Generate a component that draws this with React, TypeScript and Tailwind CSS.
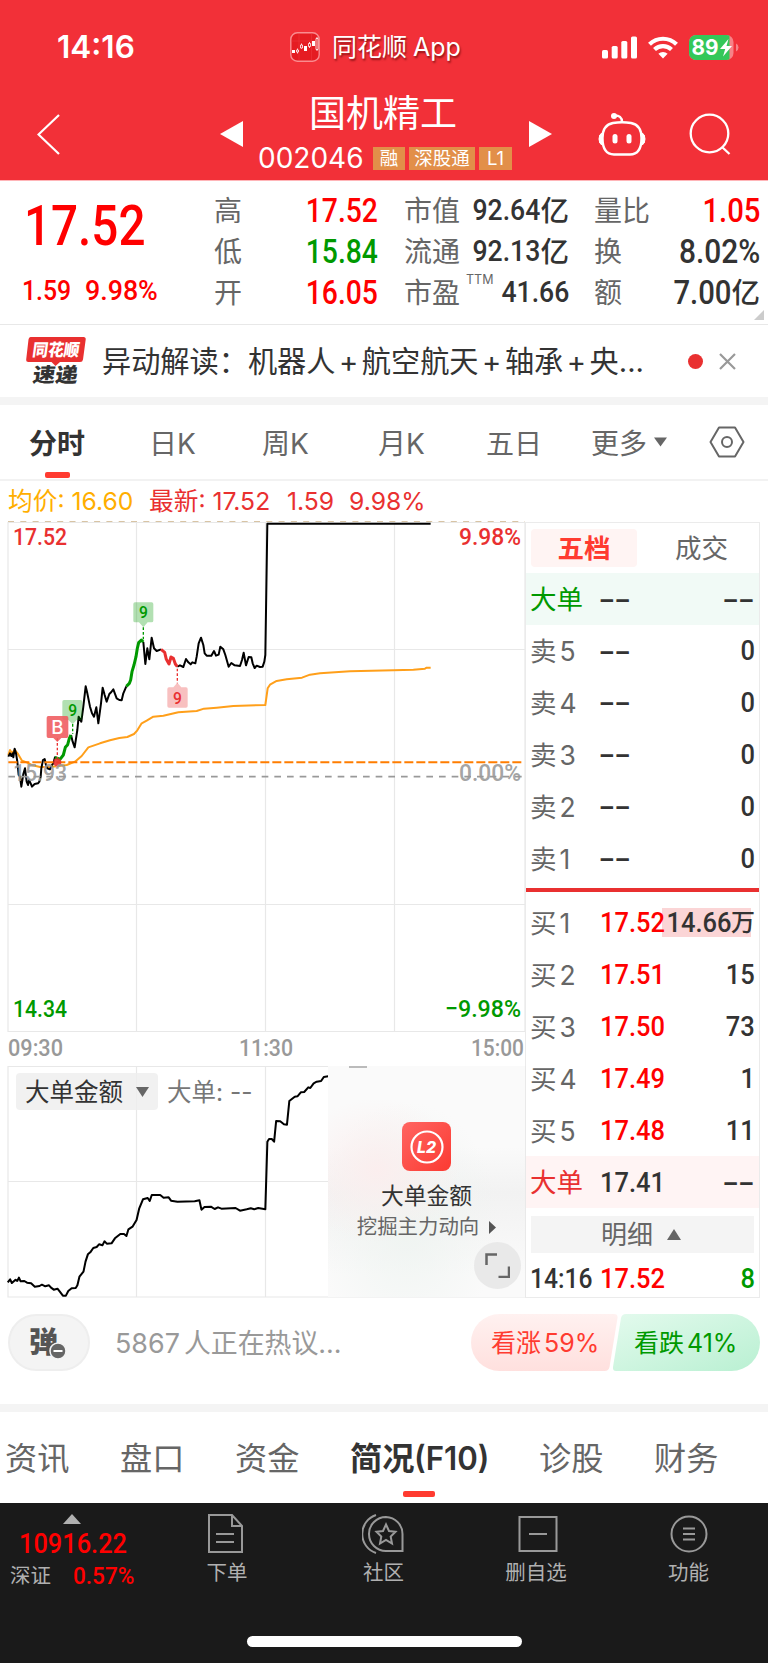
import type { ReactNode } from 'react';
import clsx from 'clsx';

interface Stat {
  label: string;
  value: string;
  unit?: string;
  sup?: string;
  color?: string;
}

interface Level {
  label: string;
  index?: number;
  price: string;
  volume: string;
}

const statColumns: { className: string; size: string; num: string; stats: Stat[] }[] = [
  {
    className: 'w-[164px]',
    size: 'text-[32.5px]',
    num: 'scale-x-[.87]',
    stats: [
      { label: '高', value: '17.52', color: 'text-[#ff0000]' },
      { label: '低', value: '15.84', color: 'text-[#009900]' },
      { label: '开', value: '16.05', color: 'text-[#ff0000]' }
    ]
  },
  {
    className: 'ml-[26px] w-[165px]',
    size: 'text-[29.5px]',
    num: 'scale-x-[.9]',
    stats: [
      { label: '市值', value: '92.64', unit: '亿' },
      { label: '流通', value: '92.13', unit: '亿' },
      { label: '市盈', value: '41.66', sup: 'TTM' }
    ]
  },
  {
    className: 'ml-[25px] w-[166px]',
    size: 'text-[32.5px]',
    num: 'scale-x-[.9]',
    stats: [
      { label: '量比', value: '1.05', color: 'text-[#ff0000]' },
      { label: '换', value: '8.02%' },
      { label: '额', value: '7.00', unit: '亿' }
    ]
  }
];

const sells: Level[] = [5, 4, 3, 2, 1].map((index) => ({ label: '卖', index, price: '--', volume: '0' }));

const buys: Level[] = [
  { label: '买', index: 1, price: '17.52', volume: '14.66' },
  { label: '买', index: 2, price: '17.51', volume: '15' },
  { label: '买', index: 3, price: '17.50', volume: '73' },
  { label: '买', index: 4, price: '17.49', volume: '1' },
  { label: '买', index: 5, price: '17.48', volume: '11' }
];

function Num({ children, className }: { children: ReactNode; className?: string }) {
  return (
    <span className={clsx("inline-block whitespace-nowrap font-medium [font-family:Roboto,sans-serif]", className)}>
      {children}
    </span>
  );
}

function StatusBar() {
  return (
    <div className="flex h-[94px] items-center">
      <span className="ml-[57px] w-[233px] text-[31.500px] leading-none font-semibold">14:16</span>
      <svg width="30" height="30" viewBox="0 0 30 30">
        <rect x="0.8" y="0.8" width="28.4" height="28.4" rx="6.5" fill="#e51c22" stroke="#fa8b8f" strokeWidth="1.4" />
        <path d="M1.5 9h27M9 1.5v27M21.500 1.5v27" stroke="#ee3b40" strokeWidth="0.5" />
        <g fill="#fff">
          <path d="M2 18h3v3H2zM14 14h3v5h-3zM22 9h3v5h-3z" />
          <path d="M7.500 16.500v5M11.500 11.500v5M19.500 10v6M27 5v14" stroke="#fff" strokeWidth="0.8" />
        </g>
        <path d="M6.500 18h2v2h-2zM10.500 13h2v3h-2zM18.500 11.500h2v3h-2zM26 6.500h2v11h-2z" fill="#e51c22" stroke="#fff" strokeWidth="0.8" />
      </svg>
      <span className="ml-[12px] w-[269px] text-[25px] leading-none [text-shadow:1px_2px_2px_rgba(80,0,0,.6)]">
        同花顺<span className="ml-[6px]">App</span>
      </span>
      <svg className="ml-[1px]" width="36" height="23" viewBox="0 0 36 23" fill="#fff">
        <rect x="0" y="14" width="6" height="8.500" rx="1.6" />
        <rect x="9.700" y="10" width="6" height="12.500" rx="1.600" />
        <rect x="19.300" y="5" width="6" height="17.500" rx="1.600" />
        <rect x="29" y="0.500" width="6" height="22" rx="1.600" />
      </svg>
      <svg className="ml-[10px]" width="30" height="23" viewBox="0 0 30 23" fill="none" stroke="#fff" strokeWidth="4.200">
        <path d="M1.500 8.200a19.500 19.500 0 0 1 27 0" />
        <path d="M6.500 13.600a12.300 12.300 0 0 1 17 0" />
        <path d="M15 22.500l-4.600-4.700a6.600 6.600 0 0 1 9.200 0z" fill="#fff" stroke="none" />
      </svg>
      <svg className="ml-[11px]" width="50" height="25" viewBox="0 0 50 25">
        <defs>
          <clipPath id="battery">
            <rect width="44.500" height="25" rx="7" />
          </clipPath>
        </defs>
        <g clipPath="url(#battery)">
          <rect width="45" height="25" fill="#f78287" />
          <rect width="40.500" height="25" fill="#34c759" />
        </g>
        <path d="M47 8.500q2.500 1 2.500 4t-2.500 4z" fill="#f78287" />
        <text x="2.500" y="20.300" fontSize="21.500" fontWeight="700" fill="#fff" fontFamily="Inter" textLength="27" lengthAdjust="spacingAndGlyphs">89</text>
        <path d="M39.500 4L31 14h5.200L34 21.500 43 11h-5.500z" fill="#fff" />
      </svg>
    </div>
  );
}

function TitleBar() {
  return (
    <div className="flex h-[86px]">
      <svg className="mt-[20px] ml-[37px] shrink-0" width="24" height="42" viewBox="0 0 24 42" fill="none" stroke="#fff" strokeWidth="2.200">
        <path d="M22 1L1.500 20.500 22 40" />
      </svg>
      <svg className="mt-[27px] ml-[159px] shrink-0" width="23" height="26" viewBox="0 0 23 26">
        <path d="M0 13L23 0v26z" fill="#fff" />
      </svg>
      <div className="ml-[13px] flex w-[258px] shrink-0 flex-col items-center">
        <h1 className="mt-[1px] mr-[4px] text-[37px] leading-[38px]">国机精工</h1>
        <div className="mt-[12px] flex items-center self-start">
          <span className="ml-[2px] w-[115px] text-[28px] leading-[26px]">002046</span>
          <span className="mr-[4px] w-[32px] bg-[#e28f49] text-center text-[18.500px] leading-[23px]">融</span>
          <span className="mr-[4px] w-[66px] bg-[#e28f49] text-center text-[18.500px] leading-[23px]">深股通</span>
          <span className="w-[33px] bg-[#e28f49] text-center text-[18.500px] leading-[23px]">L1</span>
        </div>
      </div>
      <svg className="mt-[27px] ml-[15px] shrink-0" width="23" height="26" viewBox="0 0 23 26">
        <path d="M23 13L0 0v26z" fill="#fff" />
      </svg>
      <svg className="mt-[18px] ml-[46px] shrink-0" width="48" height="44" viewBox="0 0 48 44" fill="none" stroke="#fff" strokeWidth="2.400">
        <path d="M15 11Q4.500 13 4.500 26 4.500 42.500 16 42.500h16Q43.500 42.500 43.500 26 43.500 13 33 11 24 9.500 15 11z" />
        <path d="M16 3.500Q24 3 24 10" />
        <circle cx="16" cy="4" r="3" fill="#fff" stroke="none" />
        <path d="M4 21q-3 1-3 6t3 6zM44 21q3 1 3 6t-3 6z" fill="#fff" strokeWidth="1" />
        <rect x="14.500" y="22" width="5" height="9.500" rx="2.500" fill="#fff" stroke="none" />
        <rect x="28.500" y="22" width="5" height="9.500" rx="2.500" fill="#fff" stroke="none" />
      </svg>
      <svg className="mt-[19px] ml-[43px] shrink-0" width="42" height="42" viewBox="0 0 42 42" fill="none" stroke="#fff" strokeWidth="2.300">
        <circle cx="20.500" cy="20.500" r="18.800" />
        <path d="M33 34l7.500 7" />
      </svg>
    </div>
  );
}

function Quote() {
  return (
    <section className="relative flex h-[145px] border-t border-b border-t-[#ffb5b8] border-b-[#e8e8e8]">
      <div className="flex w-[214px] shrink-0 flex-col text-[#ff0000]">
        <Num className="mt-[19px] ml-[24px] origin-left scale-x-[.85] text-[56px] leading-[52px]">17.52</Num>
        <div className="mt-[24px] flex text-[28.500px] leading-[30px]">
          <Num className="ml-[22px] w-[63px] origin-left scale-x-[.87]">1.59</Num>
          <Num className="origin-left scale-x-[.94]">9.98%</Num>
        </div>
      </div>
      {statColumns.map((column, i) => (
        <div key={i} className={clsx('mt-[9.500px] flex shrink-0 flex-col', column.className)}>
          {column.stats.map((stat) => (
            <div key={stat.label} className="flex h-[41px] items-center justify-between">
              <span className="flex text-[28px] leading-none whitespace-nowrap text-[#666]">
                {stat.label}
                {stat.sup && <sup className="top-[-5px] ml-[6px] text-[12.500px] leading-none">{stat.sup}</sup>}
              </span>
              <span className={clsx('flex items-center leading-none', column.size, stat.color ?? 'text-[#333]')}>
                <Num className={clsx('origin-right', stat.value === '8.02%' ? 'scale-x-[.92]' : column.num)}>{stat.value}</Num>
                {stat.unit && <span className="text-[28.500px] leading-none font-medium">{stat.unit}</span>}
              </span>
            </div>
          ))}
        </div>
      ))}
      <svg className="absolute right-1 bottom-1" width="10" height="10">
        <path d="M10 0v10H0z" fill="#ccc" />
      </svg>
    </section>
  );
}

function NewsBar() {
  return (
    <section className="flex h-[72px] items-center">
      <svg className="ml-[25px] shrink-0 overflow-visible" width="62" height="50" viewBox="0 0 62 50" fontFamily="Noto Sans CJK SC" fontWeight="900">
        <path d="M5.500 1h53q2.500 0 2.200 2.500l-2.700 20q-.3 2.500-3 2.500H35l-4.500 4-4-4H3.500q-2.500 0-2.300-2.500l2.300-20q.3-2.500 2-2.500z" fill="#e93030" />
        <g transform="skewX(-8)">
          <text x="9.500" y="19.500" fontSize="17" fill="#fff" textLength="47" lengthAdjust="spacingAndGlyphs">同花顺</text>
          <text x="13.500" y="46.500" fontSize="20" fill="#333" textLength="45" lengthAdjust="spacingAndGlyphs">速递</text>
        </g>
      </svg>
      <span className="ml-[15px] w-[581px] pt-[1px] text-[29.200px] leading-[36px] whitespace-nowrap text-[#333]">
        异动解读：机器人<span className="mx-[3.500px]">+</span>航空航天<span className="mx-[3.500px]">+</span>轴承
        <span className="mx-[3.500px]">+</span>央...
      </span>
      <span className="ml-[5px] size-[15px] shrink-0 rounded-full bg-[#e93030]" />
      <svg className="ml-[16px] shrink-0" width="17" height="17" fill="none" stroke="#999" strokeWidth="2.200">
        <path d="M1 1l15 15M16 1L1 16" />
      </svg>
    </section>
  );
}

function PeriodTabs() {
  return (
    <nav className="flex h-[76px] items-center border-b-2 border-[#f2f2f2] text-[28px] leading-none whitespace-nowrap text-[#666]">
      <span className="relative top-[1.500px] ml-[29px] w-[120px] font-bold text-[#333]">
        分时
        <i className="absolute top-[42px] left-[16px] h-[6px] w-[25px] rounded-[2px] bg-[#ff3b30]" />
      </span>
      <span className="w-[113px] pt-[3px]">日K</span>
      <span className="w-[116px] pt-[3px]">周K</span>
      <span className="w-[108px] pt-[3px]">月K</span>
      <span className="w-[105px] pt-[3px]">五日</span>
      <span className="w-[63px] pt-[3px]">更多</span>
      <svg width="13" height="10">
        <path d="M0 0.500h13l-6.500 9z" fill="#666" />
      </svg>
      <svg className="ml-[42px]" width="36" height="32" fill="none" stroke="#666" strokeWidth="2">
        <path d="M10 1.500h16L34.500 16 26 30.500H10L1.500 16z" strokeLinejoin="round" />
        <circle cx="18" cy="16" r="5" />
      </svg>
    </nav>
  );
}

const label = { fontFamily: 'Roboto', fontWeight: 500, fontSize: 24.5, lengthAdjust: 'spacingAndGlyphs' as const };

function PriceChart() {
  return (
    <svg className="block" width="526" height="512" viewBox="0 0 526 512" fill="none">
      <path d="M8 2.500h517V511.500H8zM8 129.500h517M8 384.500h517M136.500 2v509M265.500 2v509M394.500 2v509" stroke="#e8e8e8" strokeWidth="1.200" />
      <path d="M8 1.500h517" stroke="#d8c4a4" strokeWidth="1.200" strokeDasharray="6 6.300" />
      <text {...label} x="13" y="25" textLength="54" fill="#e93030">17.52</text>
      <text {...label} x="459" y="25" textLength="62" fill="#e93030">9.98%</text>
      <text {...label} x="13" y="496.500" textLength="54" fill="#090">14.34</text>
      <text {...label} x="445" y="496.500" textLength="76" fill="#090">−9.98%</text>

      {/* traced at three units per pixel */}
      <g transform="scale(.33333)" strokeWidth="6" strokeLinejoin="round">
        <polyline stroke="#ff9f1a" points="25,705 30,690 36,700 44,690 54,702 66,722 82,728 95,735 120,741 150,741 175,738 200,735 225,725 245,708 265,682 300,670 330,661 358,654 382,651 402,642 412,631 425,610 440,602 460,590 490,587 535,577 590,573 612,566 650,563 700,558 796,555 803,505 810,494 830,483 860,478 906,473 930,464 960,460 1050,454 1180,451 1240,449 1275,446 1280,443 1292,443" />
        <polyline stroke="#000" points="25,710 30,700 34,708 38,700 40,712 44,686 48,700 52,725 56,765 60,770 64,800 70,762 75,745 80,785 84,795 87,780 92,790 96,800 104,792 114,790 118,785 122,770 124,745 129,720 134,717 138,735 142,745 150,748 156,735 160,730 165,712 180,718" />
        <polyline stroke="#000" points="213,645 218,665 224,682 232,630 236,590 244,605 250,560 257,499 262,520 270,560 276,580 282,590 289,562 295,610 303,550 308,503 314,525 320,545 328,522 334,516 340,508 350,535 358,540 365,541 370,520 379,499" />
        <polyline stroke="#000" points="430,366 436,432 442,385 448,418 455,353 462,385 470,393 483,388" />
        <polyline stroke="#000" points="532,440 540,436 550,441 558,417 565,427 572,433 577,427 586,430 590,410 596,370 603,353 610,375 614,400 620,407 634,407 642,393 648,407 656,404 661,380 670,388 676,405 686,440 694,429 704,436 720,438 726,420 731,398 738,436 746,411 754,412 758,430 764,444 770,437 780,441 788,440 793,425 796,405 802,11 1292,11" />
        <polyline stroke="#090" strokeWidth="9" points="165,712 180,718 190,705 196,682 203,674 208,655 213,645" />
        <polyline stroke="#090" strokeWidth="9" points="379,499 388,490 392,480 396,455 402,435 408,410 412,385 416,368 424,360 430,366" />
        <polyline stroke="#e93030" strokeWidth="9" points="483,388 494,397 499,418 507,432 513,411 520,415 526,432 532,440" />
        <path d="M25 727H1572" stroke="#ff7d00" strokeWidth="6" strokeDasharray="27 9" />
        <path d="M25 770H1575" stroke="#999" strokeWidth="5" strokeDasharray="20 18" />

        <path d="M430 322v38M218 612v30" stroke="#090" strokeWidth="4" strokeDasharray="8 6" />
        <path d="M172 655v60M532 446v44" stroke="#e93030" strokeWidth="4" strokeDasharray="8 6" />
        <path d="M405 247h50q5 0 5 5v50q0 5-5 5h-12l-13 15-13-15h-12q-5 0-5-5v-50q0-5 5-5z" fill="#090" fillOpacity=".3" />
        <path d="M192 540h50q5 0 5 5v50q0 5-5 5h-12l-12 13-13-13h-13q-5 0-5-5v-50q0-5 5-5z" fill="#090" fillOpacity=".3" />
        <path d="M507 502h13l12-14 12 14h14q5 0 5 5v51q0 5-5 5h-51q-5 0-5-5v-51q0-5 5-5z" fill="#e93030" fillOpacity=".3" />
        <path d="M145 588h55q5 0 5 5v56q0 5-5 5h-16l-12 12-12-12h-15q-5 0-5-5v-56q0-5 5-5z" fill="#ef5a5d" fillOpacity=".88" />
        <circle cx="172" cy="727" r="12" fill="#e93030" fillOpacity=".9" />
        <g fontFamily="Roboto" fontWeight="500" fontSize="47" textAnchor="middle">
          <text x="430" y="294" fill="#090">9</text>
          <text x="218" y="588" fill="#090">9</text>
          <text x="532" y="551" fill="#e93030">9</text>
          <text x="172" y="641" fontSize="56" fontFamily="Inter" fill="#fff">B</text>
        </g>
      </g>
      <text {...label} x="13" y="261" textLength="54" fill="#999" fillOpacity=".9">15.93</text>
      <text {...label} x="459" y="261" textLength="62" fill="#999" fillOpacity=".9">0.00%</text>
    </svg>
  );
}

function FlowChart() {
  return (
    <div className="relative h-[232px]">
      <svg className="block" width="526" height="232" viewBox="0 0 526 232" fill="none">
        <path d="M8 .5h517V231H8zM8 115.500h517M136.500 0v231M265.500 0v231" stroke="#e8e8e8" strokeWidth="1.200" />
        <polyline
          transform="translate(0 -66) scale(.338 .33333)"
          stroke="#000"
          strokeWidth="6"
          strokeLinejoin="round"
          points="23,847 30,838 35,849 46,839 51,843 56,833 61,844 72,843 80,848 92,850 103,860 117,858 124,854 134,859 145,856 151,863 159,869 170,866 177,875 186,887 195,887 202,873 212,865 224,864 229,856 235,830 247,815 253,785 260,763 267,757 276,744 286,741 293,733 303,736 309,724 316,731 330,730 340,715 356,702 367,702 374,708 380,688 392,680 404,660 412,625 423,598 437,594 443,603 449,585 474,585 484,593 499,592 506,602 525,605 576,604 590,601 596,629 605,621 624,620 635,627 645,622 655,626 697,624 710,632 730,628 742,625 752,628 764,624 785,628 791,425 796,417 804,417 811,425 817,363 829,364 840,373 849,374 856,303 872,290 880,289 890,277 900,276 912,262 918,264 928,250 937,245 950,243 958,231 971,229"
        />
      </svg>
      <div className="absolute top-[7px] left-[16px] flex h-[37px] items-center text-[24.500px] leading-none whitespace-nowrap">
        <span className="flex h-full w-[142px] items-center rounded-[4px] bg-[#ededed]/80 pt-[1px] pl-[9px] text-[#333]">
          大单金额
          <svg className="ml-[13px]" width="13" height="10">
            <path d="M0 0h13L6.500 10z" fill="#666" />
          </svg>
        </span>
        <span className="ml-[9px] pt-[1px] text-[#777]">大单: --</span>
      </div>
      <div className="absolute top-0 left-[328px] flex h-[231px] w-[197px] flex-col items-center bg-[#fafafa] bg-[radial-gradient(ellipse_at_25%_45%,#fbeeee_0%,transparent_40%),radial-gradient(ellipse_at_40%_68%,#eff4f1_0%,transparent_55%),linear-gradient(to_bottom,#fafafa_35%,#f2f2f2_55%,#fafafa_90%)]">
        <i className="absolute top-0 left-[21px] h-[1.500px] w-[18px] bg-[#bbb]" />
        <svg className="mt-[56px]" width="49" height="49" viewBox="0 0 49 49">
          <defs>
            <linearGradient id="l2" x1="0" y1="0" x2="1" y2="1">
              <stop stopColor="#ff6561" />
              <stop offset="1" stopColor="#fb3a32" />
            </linearGradient>
          </defs>
          <rect width="49" height="49" rx="8" fill="url(#l2)" />
          <circle cx="25" cy="25" r="15.500" fill="none" stroke="#fff" strokeWidth="2.200" />
          <text x="15" y="31" fontSize="16" fontFamily="Inter" fontWeight="800" fontStyle="italic" fill="#fff" textLength="19" lengthAdjust="spacingAndGlyphs">L2</text>
        </svg>
        <span className="mt-[12px] text-[22.800px] leading-[26px] text-[#333]">大单金额</span>
        <span className="mt-[6px] flex items-center text-[20.400px] leading-[24px] whitespace-nowrap text-[#666]">
          挖掘主力动向
          <svg className="ml-[10px]" width="7" height="13">
            <path d="M0 0l7 6.500L0 13z" fill="#555" />
          </svg>
        </span>
        <span className="absolute right-[4px] bottom-[8px] flex size-[47px] items-center justify-center rounded-full bg-[#e9e9e9]">
          <svg width="25" height="25" fill="none" stroke="#666" strokeWidth="2.500">
            <path d="M1.500 12V1.500H12M24 13.500V24H13.500" />
          </svg>
        </span>
      </div>
    </div>
  );
}

function Dashes({ className }: { className: string }) {
  return (
    <span className={clsx('inline-block scale-x-[1.3] text-[29.500px] leading-none font-medium tracking-[-1.5px] text-[#333]', className)}>
      --
    </span>
  );
}

function LevelRow({ level, className = 'text-[#666]' }: { level: Level; className?: string }) {
  const big = level.label === '大单';
  return (
    <div className={clsx('relative flex h-[51.9px] items-center pt-[1px] pl-[4px] text-[26.500px] leading-none', className)}>
      {level.volume === '14.66' && <i className="absolute top-[11px] right-[8px] h-[29px] w-[89px] bg-[#fbd5d6]" />}
      <span className="relative w-[70px] whitespace-nowrap">
        {level.label}
        {level.index && <span className="ml-[3px]">{level.index}</span>}
      </span>
      {level.price === '--' ? (
        <Dashes className="-ml-[2px] origin-left" />
      ) : (
        <Num className={clsx('relative origin-left scale-x-[.91] text-[28px]', big ? 'text-[#333]' : 'text-[#ff0000]')}>{level.price}</Num>
      )}
      <span className="absolute right-[4px] flex items-center text-[28px] text-[#333]">
        {level.volume === '--' ? <Dashes className="mr-[2px] origin-right" /> : <Num className="origin-right scale-x-[.91]">{level.volume}</Num>}
        {level.volume === '14.66' && <span className="text-[24px] font-medium">万</span>}
      </span>
    </div>
  );
}

function OrderBook() {
  return (
    <aside className="-ml-px flex h-[776px] w-[235px] flex-col border border-[#ebebeb]">
      <div className="flex h-[50px] shrink-0 items-center text-[26.500px] leading-none">
        <span className="ml-[5px] flex h-[38px] w-[106px] items-center justify-center rounded-[4px] bg-[#fff4f3] font-bold text-[#ff3b30]">五档</span>
        <span className="ml-[38px] text-[#666]">成交</span>
      </div>
      <LevelRow level={{ label: '大单', price: '--', volume: '--' }} className="bg-[#f1faf6] text-[#090]" />
      {sells.map((level) => (
        <LevelRow key={level.index} level={level} />
      ))}
      <div className="mt-[4px] mb-[4.500px] h-[4px] shrink-0 bg-[#e93030]" />
      {buys.map((level) => (
        <LevelRow key={level.index} level={level} />
      ))}
      <LevelRow level={{ label: '大单', price: '17.41', volume: '--' }} className="bg-[#fff4f4] text-[#e93030]" />
      <div className="mr-[5px] ml-[5px] mt-[8px] flex h-[37px] shrink-0 items-center bg-[#f4f4f4] pl-[70px] text-[26px] leading-none text-[#666]">
        明细
        <svg className="ml-[14px]" width="14" height="11">
          <path d="M0 11L7 0l7 11z" fill="#666" />
        </svg>
      </div>
      <div className="relative mt-[8px] flex h-[35px] items-center text-[28px] leading-none">
        <Num className="ml-[4px] w-[70px] origin-left scale-x-[.88] text-[#333]">14:16</Num>
        <Num className="origin-left scale-x-[.91] text-[#ff0000]">17.52</Num>
        <Num className="absolute right-[4px] origin-right scale-x-[.91] text-[#090]">8</Num>
      </div>
    </aside>
  );
}

function CommentBar() {
  return (
    <div className="flex h-[106px] items-start pt-[16px] pl-[8px]">
      <span className="relative flex h-[57px] w-[82px] items-center rounded-full border-2 border-[#eee] bg-[#f4f4f4] pl-[19px] text-[29px] leading-none font-black text-[#555]">
        弹
        <svg className="absolute top-[26px] left-[39px]" width="18" height="18">
          <circle cx="9" cy="9" r="8" fill="#666" stroke="#f4f4f4" strokeWidth="1.500" />
          <path d="M4.500 9h9" stroke="#fff" strokeWidth="2" />
        </svg>
      </span>
      <span className="ml-[25px] w-[356px] text-[26.900px] leading-[58px] whitespace-nowrap text-[#999]">
        5867<span className="ml-[4px]">人正在热议...</span>
      </span>
      <div className="relative h-[57px] w-[289px]">
        <svg className="block" width="289" height="57">
          <defs>
            <linearGradient id="rise" x1="0" y1="0" x2="0" y2="1">
              <stop stopColor="#fff1f0" />
              <stop offset="1" stopColor="#ffe0de" />
            </linearGradient>
            <linearGradient id="fall" x1="0" y1="0" x2="1" y2="1">
              <stop stopColor="#e3faed" />
              <stop offset="1" stopColor="#b9f0d2" />
            </linearGradient>
          </defs>
          <path d="M28.500 0H143q4 0 3.500 4l-8 49q-.8 4-5 4H28.500a28.500 28.500 0 0 1 0-57z" fill="url(#rise)" />
          <path d="M155 0h105.500a28.500 28.500 0 0 1 0 57H145q-3.500 0-3-4l8-49q1-4 5-4z" fill="url(#fall)" />
        </svg>
        <div className="absolute inset-0 flex text-[25px] leading-[58px] whitespace-nowrap">
          <span className="ml-[20px] w-[143px] text-[#ff3b30]">
            看涨<span className="ml-[3px]">59%</span>
          </span>
          <span className="text-[#090]">
            看跌<span className="ml-[3px]">41%</span>
          </span>
        </div>
      </div>
    </div>
  );
}

function SectionTabs() {
  return (
    <nav className="flex h-[91px] items-center pt-[3px] text-[32.200px] leading-none whitespace-nowrap text-[#666]">
      <span className="ml-[5px] w-[115px]">资讯</span>
      <span className="w-[115px]">盘口</span>
      <span className="w-[115px]">资金</span>
      <span className="relative w-[189px] font-bold text-[#333]">
        简况<span className="inline-block origin-left scale-x-[.97] font-semibold">(F10)</span>
        <i className="absolute top-[48px] left-[53px] h-[6px] w-[32px] rounded-[2px] bg-[#ff3b30]" />
      </span>
      <span className="w-[115px]">诊股</span>
      <span>财务</span>
    </nav>
  );
}

function NavItem({ text, className, children }: { text: string; className: string; children: ReactNode }) {
  return (
    <div className={clsx('flex flex-col items-center', className)}>
      <svg className="mt-[9px]" width="44" height="44" viewBox="0 0 44 44" fill="none" stroke="#999" strokeWidth="2">
        {children}
      </svg>
      <span className="mt-[5px] text-[20.500px] leading-[24px] text-[#b0b0b0]">{text}</span>
    </div>
  );
}

function BottomBar() {
  return (
    <footer className="relative flex h-[160px] bg-[#1a1a1a]">
      <div className="flex w-[150px] flex-col">
        <svg className="mt-[11px] ml-[63px]" width="18" height="10">
          <path d="M0 10L9 0l9 10z" fill="#b0b0b0" />
        </svg>
        <Num className="mt-[4px] ml-[19px] origin-left scale-x-[.89] text-[28.500px] leading-[32px] text-[#ff0000]">10916.22</Num>
        <div className="mt-[4px] flex items-center leading-[24px]">
          <span className="ml-[10px] w-[63px] text-[20.500px] text-[#b0b0b0]">深证</span>
          <Num className="origin-left scale-x-[.92] text-[24.500px] text-[#ff0000]">0.57%</Num>
        </div>
      </div>
      <NavItem text="下单" className="w-[154px]">
        <path d="M5 3h23l10 11v26H5V3zM28 3v11h10M12 22h18M12 30h18" transform="translate(-1 0)" />
      </NavItem>
      <NavItem text="社区" className="w-[159px]">
        <path d="M24 5a17 17 0 0 0 0 34h16.500V22A17 17 0 0 0 24 5zM14 3a20 20 0 0 0 0 38" />
        <path d="M24 12.500l3 6.500 6.500.8-4.800 4.700 1.300 7-6-3.500-6 3.500 1.300-7-4.800-4.700L21 19z" />
      </NavItem>
      <NavItem text="删自选" className="w-[146px]">
        <path d="M5.500 5h37v34h-37zM15 22h18" />
      </NavItem>
      <NavItem text="功能" className="w-[159px]">
        <circle cx="22" cy="22" r="17.500" />
        <path d="M16 16.500h12M16 22h12M16 27.500h12" />
      </NavItem>
      <i className="absolute bottom-[16px] left-[247px] h-[11px] w-[275px] rounded-full bg-white" />
    </footer>
  );
}

export default function App() {
  return (
    <div className="h-[1663px] w-[768px] overflow-hidden bg-white [font-family:Inter,'Noto_Sans_CJK_SC',sans-serif]">
      <header className="h-[180px] bg-[#f23038] text-white">
        <StatusBar />
        <TitleBar />
      </header>
      <Quote />
      <NewsBar />
      <div className="h-[8px] bg-[#f4f4f4]" />
      <PeriodTabs />
      <div className="flex h-[39px] items-center pt-[2px] pl-[8px] text-[24.700px] leading-none whitespace-nowrap text-[#e93030]">
        <span className="w-[141px] text-[#ffae00]">均价: 16.60</span>
        <span className="w-[138px]">最新: 17.52</span>
        <span className="w-[62px]">1.59</span>
        <span>9.98%</span>
      </div>
      <div className="flex h-[778px]">
        <div className="w-[526px] shrink-0">
          <PriceChart />
          <svg className="block overflow-visible" width="526" height="34" fill="#999">
            <text {...label} x="8" y="24" textLength="55">09:30</text>
            <text {...label} x="239" y="24" textLength="54">11:30</text>
            <text {...label} x="471" y="24" textLength="53">15:00</text>
          </svg>
          <FlowChart />
        </div>
        <div className="pt-[2px]">
          <OrderBook />
        </div>
      </div>
      <CommentBar />
      <div className="h-[8px] bg-[#f4f4f4]" />
      <SectionTabs />
      <BottomBar />
    </div>
  );
}
